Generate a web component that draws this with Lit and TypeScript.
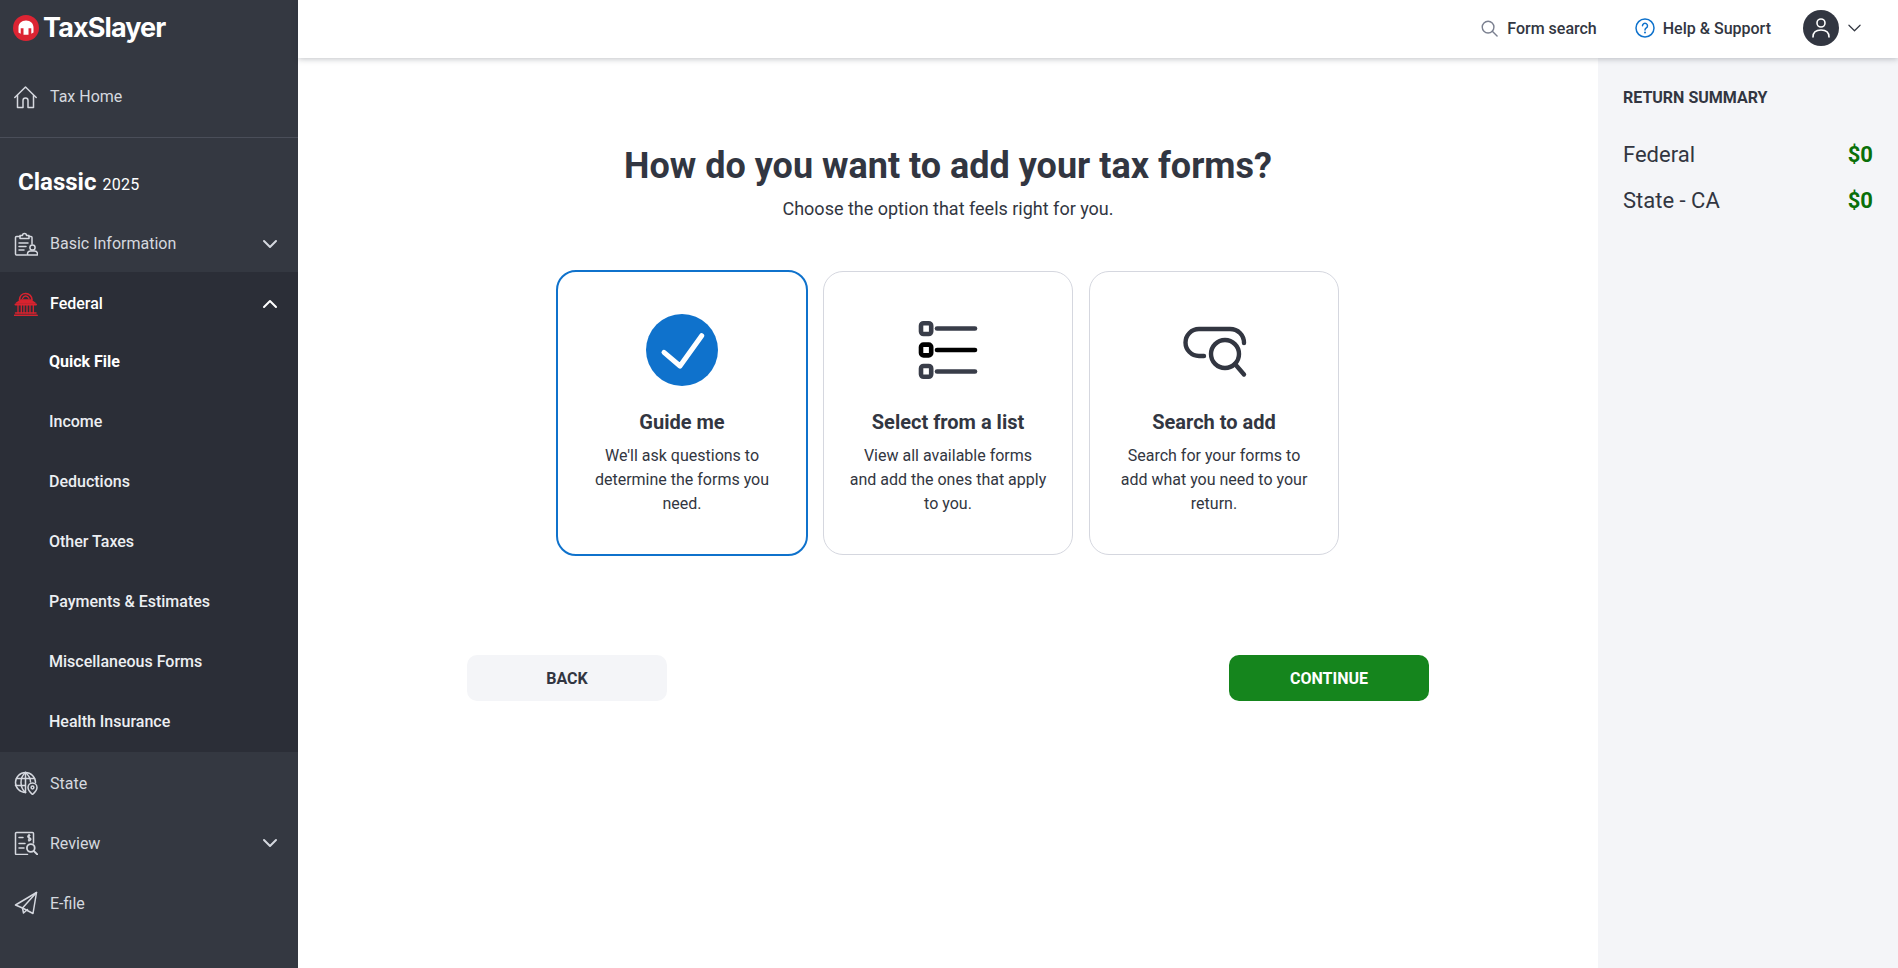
import { LitElement, html, css, svg } from "lit";
import { customElement } from "lit/decorators.js";

const chevron = (up: boolean) => html`<svg class="chev" viewBox="0 0 16 10" width="16" height="10" fill="none" stroke="currentColor" stroke-width="2" stroke-linecap="round" stroke-linejoin="round"><path d=${up ? "M2 8l6-6 6 6" : "M2 2l6 6 6-6"}></path></svg>`;

const i = (body: unknown, color = "#d5d8df") => html`<svg class="ico" viewBox="0 0 24 24" width="24" height="24" fill="none" stroke=${color} stroke-width="1.5" stroke-linecap="round" stroke-linejoin="round">${body}</svg>`;

const icons = {
  home: i(svg`<path d="M.8 12.500 11.500 2l10.700 10.500"/><path d="M3.500 10.500V22.500h5.500V15.500a2.500 2.500 0 0 1 5 0v7h5.500V10.500"/>`),
  info: i(svg`<path d="M6 4.500H2.500a1 1 0 0 0-1 1V22a1 1 0 0 0 1 1h10"/><path d="M15 4.500h2a1 1 0 0 1 1 1V12"/><path d="M6 6.500v-3h2.500a2 2 0 0 1 4 0H15v3z"/><path d="M5 11h9M5 14.500h7M5 18h5"/><circle cx="18.500" cy="15.500" r="2.600"/><path d="M13.500 23v-1.500a3 3 0 0 1 3-2.500h4a3 3 0 0 1 3 2.500V23z"/>`),
  state: i(svg`<path d="M21.500 11.500a10 10 0 1 0-10 10"/><path d="M11.500 1.500c-6 5-6 15 0 20M11.500 1.500c3.500 3 5 6.500 5 9.500"/><path d="M2.500 7.500h18M1.500 14.500h10M11.500 1.500v20"/><path d="M18.500 23.500s-4.500-4-4.500-7a4.500 4.500 0 0 1 9 0c0 3-4.500 7-4.500 7z"/><circle cx="18.500" cy="16.500" r="1.400"/>`),
  review: i(svg`<path d="M19.500 12V2.500a1 1 0 0 0-1-1h-16a1 1 0 0 0-1 1v20a1 1 0 0 0 1 1h11"/><path d="M5 6.500h4M5 12.500h6M5 17h5"/><path d="M15.800 4.500c-1.800-.8-3 1.500-.5 2.300s1.700 3-.8 2.200M15 3.500v6.500"/><circle cx="16.800" cy="17" r="3.900" stroke-width="1.800"/><path d="m19.800 20 3.500 3.500" stroke-width="1.800"/>`),
  efile: i(svg`<path d="M22.500 1.500 1.500 14l7 3 10.500 5.500z"/><path d="M22.500 1.500 8.500 17l1 5 4-3.500"/>`),
};

const capitol = html`<svg class="ico" viewBox="0 0 24 24" width="24" height="24" fill="none" stroke="#d8232f" stroke-width="1.500" stroke-linecap="round" stroke-linejoin="round">
  <path d="M.5 23.500h22.500" stroke-width="1.800"></path>
  <path d="M1.500 21h20.500"></path>
  <path d="M4 13v8M7.300 13v8M10 13v8M13 13v8M16 13v8M19.300 13v8" stroke-width="1.300"></path>
  <path d="M1.500 12.500h20.500" stroke-width="2"></path>
  <path d="M2.500 11l4.500-3h9.500L21 11z" fill="#d8232f"></path>
  <path d="M5.500 8c0-4 2.800-6.500 6.200-6.500S18 4 18 8" stroke-width="1.700"></path>
  <path d="M8.500 6.500c1-2 2-2.500 3.200-2.500s2.300.5 3.300 2.500" stroke-width="1.300"></path>
</svg>`;

const subs = ["Quick File", "Income", "Deductions", "Other Taxes", "Payments & Estimates", "Miscellaneous Forms", "Health Insurance"];

const cards = [
  {
    title: "Guide me", desc: ["We'll ask questions to", "determine the forms you", "need."], sel: true,
    icon: html`<svg viewBox="0 0 72 72" width="72" height="72"><circle cx="36" cy="36" r="36" fill="#0f72cc"></circle><path d="M18 38.300 34 52 55.700 21.700" fill="none" stroke="#fff" stroke-width="5" stroke-linecap="round" stroke-linejoin="round"></path></svg>`,
  },
  {
    title: "Select from a list", desc: ["View all available forms", "and add the ones that apply", "to you."], sel: false,
    icon: html`<svg viewBox="0 0 72 72" width="72" height="72" fill="none" stroke-width="4.600" stroke-linecap="round">
      <g stroke="#393d49"><rect x="9" y="9.200" width="10.200" height="10.800" rx="2.500"></rect><path d="M25 14.500h38"></path></g>
      <g stroke="#000"><rect x="9" y="30.600" width="10.200" height="10.800" rx="2.500"></rect><path d="M25 36h38"></path></g>
      <g stroke="#393d49"><rect x="9" y="52" width="10.200" height="10.800" rx="2.500"></rect><path d="M25 57.500h38"></path></g>
    </svg>`,
  },
  {
    title: "Search to add", desc: ["Search for your forms to", "add what you need to your", "return."], sel: false,
    icon: html`<svg viewBox="0 0 72 72" width="72" height="72" fill="none" stroke="#323641" stroke-width="4.400" stroke-linecap="round">
      <path d="M26 42h-5a13.500 13.500 0 0 1 0-27h31c8 0 14 6 14 14"></path>
      <circle cx="47" cy="40" r="14"></circle>
      <path d="M57 50l9 10.500"></path>
    </svg>`,
  },
];

@customElement("app-root")
export class AppRoot extends LitElement {
  static styles = css`
    :host { display: flex; width: 100%; height: 968px; overflow: hidden; font-family: Roboto, "Liberation Sans", sans-serif; color: #323641; background: #fff; }
    .side { width: 298px; flex: none; background: #343841; color: #d5d8df; display: flex; flex-direction: column; }
    .logo { height: 58px; display: flex; align-items: center; gap: 4px; padding: 0 0 3px 13px; box-sizing: border-box; }
    .logo span { font-family: Inter, Roboto, sans-serif; font-size: 27px; font-weight: 700; letter-spacing: -0.9px; color: #fff; }
    .row { display: flex; align-items: center; height: 60px; padding-left: 14px; padding-right: 20px; box-sizing: border-box; font-size: 16px; }
    .row .ico { margin-right: 12px; flex: none; }
    .row .lbl { flex: 1; }
    .chev { color: currentColor; flex: none; }
    .home { height: 80px; border-bottom: 1px solid #4a4e59; padding-bottom: 2px; }
    .classic { height: 75px; padding: 13px 0 0 18px; box-sizing: border-box; display: flex; align-items: center; color: #fff; }
    .classic b { font-size: 24px; font-weight: 700; margin-right: 6px; }
    .classic span { font-size: 16px; padding-top: 4px; letter-spacing: 0.3px; }
    .basic { height: 59px; padding-top: 2px; }
    .fed { background: #2b2e37; height: 480px; }
    .fed .row.head { height: 59px; color: #fff; font-weight: 500; padding-top: 4px; }
    .sub { height: 60px; display: flex; align-items: center; padding-left: 49px; font-size: 16px; font-weight: 500; color: #eceef2; }
    .sub.on { font-weight: 700; color: #fff; }
    .rest { padding-top: 1px; }
    .col { flex: 1; min-width: 0; display: flex; flex-direction: column; }
    header { height: 58px; flex: none; background: #fff; box-shadow: 0 1px 6px rgba(30, 35, 50, 0.28); position: relative; z-index: 2; display: flex; align-items: center; justify-content: flex-end; padding: 0 37px 2px 0; box-sizing: border-box; font-size: 16px; font-weight: 500; color: #323641; }
    .hitem { display: flex; align-items: center; }
    .search { gap: 9px; margin-right: 38px; }
    .help { gap: 8px; margin-right: 32px; }
    .avatar { width: 36px; height: 36px; border-radius: 50%; background: #323641; display: flex; align-items: center; justify-content: center; margin-right: 9px; }
    .under { flex: 1; display: flex; min-height: 0; }
    main { flex: 1; display: flex; flex-direction: column; align-items: center; padding-top: 84px; box-sizing: border-box; }
    h1 { margin: 0; font-size: 36px; line-height: 48px; font-weight: 700; color: #323641; }
    .lead { font-size: 18px; line-height: 24px; margin-top: 7px; color: #323641; }
    .cards { display: flex; gap: 16px; margin-top: 50px; padding-right: 1px; }
    .card { width: 250px; height: 284px; box-sizing: border-box; border: 1px solid #d5d7df; border-radius: 20px; padding: 42px 10px 0; display: flex; flex-direction: column; align-items: center; text-align: center; background: #fff; }
    .card.sel { width: 252px; height: 286px; margin: -1px -1px -1px 0; border: 2px solid #0f72cc; }
    .card h2 { margin: 23px 0 0; font-size: 20px; line-height: 26px; font-weight: 700; color: #323641; }
    .card p { margin: 9px 0 0; font-size: 16px; line-height: 24px; color: #323641; }
    .card p span { display: block; }
    .btns { width: 962px; display: flex; justify-content: space-between; margin-top: 100px; }
    .btn { width: 200px; height: 46px; border-radius: 10px; display: flex; align-items: center; justify-content: center; font-size: 16px; font-weight: 700; }
    .back { background: #f4f5f8; color: #323641; }
    .go { background: #15851d; color: #fff; }
    aside { width: 300px; flex: none; background: #f4f5f8; padding: 30px 25px 0 25px; box-sizing: border-box; }
    .rs { font-size: 16px; line-height: 20px; font-weight: 700; color: #323641; }
    .sum { display: flex; justify-content: space-between; align-items: center; font-size: 22px; height: 46px; }
    .sum b { color: #0a7009; font-weight: 700; }
    .sums { margin-top: 23px; }
  `;

  render() {
    return html`
      <nav class="side">
        <div class="logo">
          <svg viewBox="0 0 26 26" width="26" height="26"><circle cx="13" cy="13" r="13" fill="#dc2433"></circle><path d="M5.500 12.500c0-4 3-7 7.500-7s7.500 3 7.500 7v5l-2.200 1.200v-5.500h-2.800v6.500h-5v-6.500H7.700v5.500l-2.200-1.200z" fill="#fff"></path></svg>
          <span>TaxSlayer</span>
        </div>
        <div class="row home">${icons.home}<span class="lbl">Tax Home</span></div>
        <div class="classic"><b>Classic</b><span>2025</span></div>
        <div class="row basic">${icons.info}<span class="lbl">Basic Information</span>${chevron(false)}</div>
        <div class="fed">
          <div class="row head">${capitol}<span class="lbl">Federal</span>${chevron(true)}</div>
          ${subs.map((s, n) => html`<div class="sub ${n === 0 ? "on" : ""}">${s}</div>`)}
        </div>
        <div class="rest">
          <div class="row">${icons.state}<span class="lbl">State</span></div>
          <div class="row">${icons.review}<span class="lbl">Review</span>${chevron(false)}</div>
          <div class="row">${icons.efile}<span class="lbl">E-file</span></div>
        </div>
      </nav>
      <div class="col">
        <header>
          <div class="hitem search">
            <svg viewBox="0 0 18 18" width="17" height="17" fill="none" stroke="#7b8090" stroke-width="1.500" stroke-linecap="round"><circle cx="7.500" cy="7.500" r="6.200"></circle><path d="M12 12l5 5"></path></svg>
            <span>Form search</span>
          </div>
          <div class="hitem help">
            <svg viewBox="0 0 20 20" width="20" height="20" fill="none"><circle cx="10" cy="10" r="9" stroke="#0f72cc" stroke-width="1.500"></circle><path d="M7.500 7.800a2.500 2.500 0 1 1 3.800 2.100c-.9.600-1.300 1-1.300 2" stroke="#0f72cc" stroke-width="1.500" stroke-linecap="round"></path><circle cx="10" cy="14.500" r="1" fill="#0f72cc"></circle></svg>
            <span>Help & Support</span>
          </div>
          <div class="avatar">
            <svg viewBox="0 0 20 22" width="20" height="22" fill="none" stroke="#fff" stroke-width="1.600" stroke-linecap="round"><circle cx="10" cy="6" r="4"></circle><path d="M2 20c0-5 3.500-7 8-7s8 2 8 7"></path></svg>
          </div>
          <svg viewBox="0 0 14 8" width="13" height="8" fill="none" stroke="#323641" stroke-width="1.300" stroke-linecap="round" stroke-linejoin="round"><path d="M1 1l6 6 6-6"></path></svg>
        </header>
        <div class="under">
          <main>
            <h1>How do you want to add your tax forms?</h1>
            <div class="lead">Choose the option that feels right for you.</div>
            <div class="cards">
              ${cards.map((c) => html`
                <div class="card ${c.sel ? "sel" : ""}">
                  ${c.icon}
                  <h2>${c.title}</h2>
                  <p>${c.desc.map((d) => html`<span>${d}</span>`)}</p>
                </div>`)}
            </div>
            <div class="btns">
              <div class="btn back">BACK</div>
              <div class="btn go">CONTINUE</div>
            </div>
          </main>
          <aside>
            <div class="rs">RETURN SUMMARY</div>
            <div class="sums">
              <div class="sum"><span>Federal</span><b>$0</b></div>
              <div class="sum"><span>State - CA</span><b>$0</b></div>
            </div>
          </aside>
        </div>
      </div>
    `;
  }
}
